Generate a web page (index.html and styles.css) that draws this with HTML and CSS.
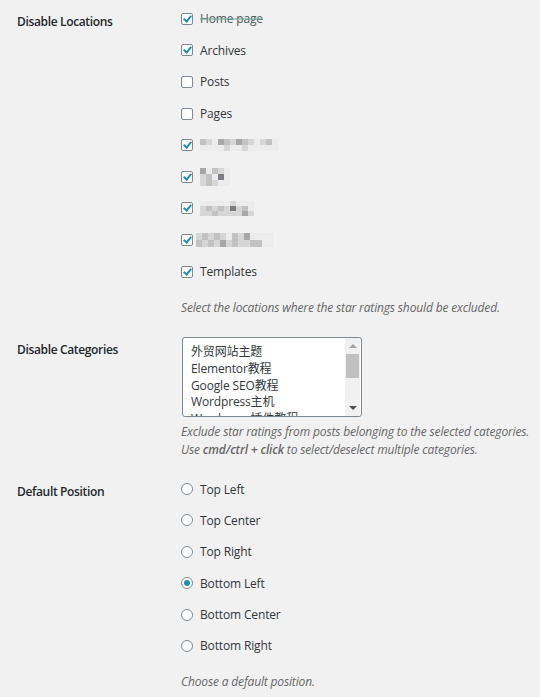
FILE: index.html
```html
<!DOCTYPE html>
<html lang="en">
<head>
  <meta charset="UTF-8">
  <title>Star Ratings Settings</title>
  <link rel="stylesheet" href="styles.css">
</head>
<body>

  <div class="form-table">

    <div class="row row-locations">
      <div class="th">Disable Locations</div>
      <div class="td">
        <ul class="choices">
          <li><span class="box checked"></span><span class="smudge">Home page</span></li>
          <li><span class="box checked"></span>Archives</li>
          <li><span class="box"></span>Posts</li>
          <li><span class="box"></span>Pages</li>
          <li><span class="box checked"></span>
            <span class="pix pix-a">
              <i class="p2"></i><i class="p1"></i><i class="p0"></i><i class="p3"></i><i class="p2"></i><i class="p1"></i><i class="p3"></i><i class="p2"></i><i class="p1"></i><i class="p0"></i><i class="p1"></i><i class="p2"></i><i class="p0"></i>
              <i class="p0"></i><i class="p0"></i><i class="p0"></i><i class="p0"></i><i class="p1"></i><i class="p0"></i><i class="p0"></i><i class="p1"></i><i class="p0"></i><i class="p0"></i><i class="p0"></i><i class="p0"></i><i class="p0"></i>
            </span>
          </li>
          <li><span class="box checked"></span>
            <span class="pix pix-b">
              <i class="p3"></i><i class="p0"></i><i class="p2"></i><i class="p1"></i><i class="p0"></i>
              <i class="p1"></i><i class="p2"></i><i class="p0"></i><i class="p4"></i><i class="p0"></i>
              <i class="p1"></i><i class="p2"></i><i class="p1"></i><i class="p0"></i><i class="p0"></i>
            </span>
          </li>
          <li><span class="box checked"></span>
            <span class="pix pix-c">
              <i class="p0"></i><i class="p0"></i><i class="p0"></i><i class="p0"></i><i class="p0"></i><i class="p1"></i><i class="p0"></i><i class="p0"></i><i class="p0"></i>
              <i class="p1"></i><i class="p2"></i><i class="p1"></i><i class="p2"></i><i class="p1"></i><i class="p4"></i><i class="p1"></i><i class="p2"></i><i class="p0"></i>
              <i class="p1"></i><i class="p1"></i><i class="p2"></i><i class="p1"></i><i class="p1"></i><i class="p1"></i><i class="p1"></i><i class="p3"></i><i class="p1"></i>
            </span>
          </li>
          <li><span class="box checked"></span>
            <span class="pix pix-d">
              <i class="p1"></i><i class="p2"></i><i class="p1"></i><i class="p2"></i><i class="p1"></i><i class="p0"></i><i class="p2"></i><i class="p1"></i><i class="p3"></i><i class="p0"></i><i class="p0"></i><i class="p0"></i><i class="p0"></i>
              <i class="p2"></i><i class="p1"></i><i class="p2"></i><i class="p1"></i><i class="p3"></i><i class="p1"></i><i class="p2"></i><i class="p1"></i><i class="p1"></i><i class="p2"></i><i class="p2"></i><i class="p0"></i><i class="p0"></i>
            </span>
          </li>
          <li><span class="box checked"></span>Templates</li>
        </ul>
        <p class="description desc-locations">Select the locations where the star ratings should be excluded.</p>
      </div>
    </div>

    <div class="row row-categories">
      <div class="th">Disable Categories</div>
      <div class="td">
        <div class="multi-select">
          <div class="options">
            <div>外贸网站主题</div>
            <div>Elementor教程</div>
            <div>Google SEO教程</div>
            <div>Wordpress主机</div>
            <div>Wordpress插件教程</div>
          </div>
          <div class="scrollbar">
            <span class="arrow-up"></span>
            <span class="thumb"></span>
            <span class="arrow-down"></span>
          </div>
        </div>
        <p class="description desc-categories">Exclude star ratings from posts belonging to the selected categories.<br>Use <b>cmd/ctrl + click</b> to select/deselect multiple categories.</p>
      </div>
    </div>

    <div class="row row-position">
      <div class="th">Default Position</div>
      <div class="td">
        <ul class="choices radios">
          <li><span class="radio"></span>Top Left</li>
          <li><span class="radio"></span>Top Center</li>
          <li><span class="radio"></span>Top Right</li>
          <li><span class="radio checked"></span>Bottom Left</li>
          <li><span class="radio"></span>Bottom Center</li>
          <li><span class="radio"></span>Bottom Right</li>
        </ul>
        <p class="description desc-position">Choose a default position.</p>
      </div>
    </div>

  </div>

</body>
</html>
```

FILE: styles.css
```css
body {
  margin: 0;
  background-color: #f1f1f1;
  font-family: "Open Sans", "Noto Sans CJK SC", sans-serif;
  font-size: 12px;
  letter-spacing: -0.15px;
  color: #23282d;
}
.form-table {
  padding-left: 17px;
}
.row {
  display: grid;
  grid-template-columns: 164px 1fr;
}
.th {
  font-weight: 600;
  letter-spacing: -0.35px;
  line-height: 18px;
  padding-top: 24px;
}
.row-locations .th {
  padding-top: 13px;
}
.row-locations .td {
  padding-top: 3px;
}
.row-categories .td {
  padding-top: 20px;
}
.row-position .td {
  padding-top: 14px;
}

ul.choices {
  list-style: none;
  margin: 0;
  padding: 0;
}
.choices li {
  height: 31.6px;
  display: flex;
  align-items: center;
  color: #32373c;
}
.radios li {
  height: 31.4px;
}

.box, .radio {
  width: 12px;
  height: 12px;
  box-sizing: border-box;
  border: 1px solid #7e8993;
  background: #fff;
  margin-right: 7px;
  flex: none;
  position: relative;
}
.box {
  border-radius: 2px;
}
.box.checked::after {
  content: "";
  position: absolute;
  left: 3px;
  top: 0px;
  width: 3px;
  height: 6px;
  border: solid #1e8cbe;
  border-width: 0 2px 2px 0;
  transform: rotate(40deg);
}
.radio {
  border-radius: 50%;
}
.radio.checked::after {
  content: "";
  position: absolute;
  left: 2px;
  top: 2px;
  width: 6px;
  height: 6px;
  border-radius: 50%;
  background: #1e8cbe;
}

.smudge {
  text-decoration: line-through;
  text-decoration-color: rgba(110, 170, 150, 0.55);
  text-decoration-thickness: 2px;
  color: #4a5a5e;
}

.pix {
  display: grid;
  grid-auto-rows: 6px;
}
.pix i {
  display: block;
}
.pix-a {
  grid-template-columns: repeat(13, 6px);
}
.pix-b {
  grid-template-columns: repeat(5, 6px);
  grid-auto-rows: 6px;
}
.pix-c {
  grid-template-columns: repeat(9, 6px);
  grid-auto-rows: 5px;
}
.pix-d {
  grid-template-columns: repeat(13, 6px);
  grid-auto-rows: 7px;
  margin-left: -4px;
}
.p0 { background: #ececec; }
.p1 { background: #d6d6d6; }
.p2 { background: #c2c2c2; }
.p3 { background: #a7a7a7; }
.p4 { background: #7b7f83; }

.description {
  margin: 0;
  font-style: italic;
  color: #666;
  line-height: 18px;
}
.desc-locations {
  margin-top: 12px;
}
.desc-categories {
  margin-top: 6px;
}
.desc-categories b {
  font-weight: 600;
}
.desc-position {
  margin-top: 11px;
}

.multi-select {
  width: 180px;
  height: 80px;
  box-sizing: border-box;
  border: 1px solid #7e8993;
  border-radius: 3px;
  background: #fff;
  display: flex;
  overflow: hidden;
  margin-left: 1px;
}
.options {
  flex: 1;
  padding: 6px 0 0 8px;
  line-height: 16.7px;
  color: #32373c;
  overflow: hidden;
  white-space: nowrap;
}
.scrollbar {
  width: 15px;
  margin-right: 1px;
  background: #f1f1f1;
  display: flex;
  flex-direction: column;
  align-items: center;
}
.arrow-up, .arrow-down {
  width: 0;
  height: 0;
  border-left: 4px solid transparent;
  border-right: 4px solid transparent;
}
.arrow-up {
  margin-top: 6px;
  border-bottom: 4px solid #a3a3a3;
}
.arrow-down {
  margin-top: auto;
  margin-bottom: 6px;
  border-top: 4px solid #505050;
}
.thumb {
  width: 13px;
  height: 24px;
  margin-top: 6px;
  background: #c1c1c1;
}
```
